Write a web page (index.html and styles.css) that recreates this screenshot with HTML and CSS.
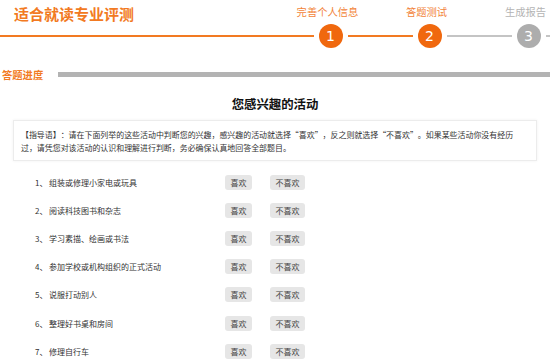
FILE: index.html
```html
<!doctype html>
<html lang="zh-CN">
<head>
<meta charset="utf-8">
<title>适合就读专业评测</title>
<link rel="stylesheet" href="styles.css">
</head>

<body>
<div class="head">
    <div class="top">
        <div class="brand">
            <h1>适合就读专业评测</h1>
            <div class="track"><span class="bar on"></span></div>
        </div>
        <div class="step on">
            <p>完善个人信息</p>
            <div class="track"><span class="bar on"></span><b>1</b><span class="bar on"></span></div>
        </div>
        <div class="step on">
            <p>答题测试</p>
            <div class="track"><span class="bar on"></span><b>2</b><span class="bar"></span></div>
        </div>
        <div class="step">
            <p>生成报告</p>
            <div class="track"><span class="bar"></span><b>3</b><span class="bar"></span></div>
        </div>
    </div>
</div>

<div class="progress">
    <span class="progress_label">答题进度</span>
    <span class="progress_bar"></span>
</div>

<h2 class="quiz_title">您感兴趣的活动</h2>

<div class="guide">【指导语】：请在下面列举的这些活动中判断您的兴趣，感兴趣的活动就选择“喜欢”，反之则就选择“不喜欢”。如果某些活动你没有经历过，请凭您对该活动的认识和理解进行判断，务必确保认真地回答全部题目。</div>

<ul class="quiz">
    <li><span class="num">1、</span><span class="text">组装或修理小家电或玩具</span><button>喜欢</button><button>不喜欢</button></li>
    <li><span class="num">2、</span><span class="text">阅读科技图书和杂志</span><button>喜欢</button><button>不喜欢</button></li>
    <li><span class="num">3、</span><span class="text">学习素描、绘画或书法</span><button>喜欢</button><button>不喜欢</button></li>
    <li><span class="num">4、</span><span class="text">参加学校或机构组织的正式活动</span><button>喜欢</button><button>不喜欢</button></li>
    <li><span class="num">5、</span><span class="text">说服打动别人</span><button>喜欢</button><button>不喜欢</button></li>
    <li><span class="num">6、</span><span class="text">整理好书桌和房间</span><button>喜欢</button><button>不喜欢</button></li>
    <li><span class="num">7、</span><span class="text">修理自行车</span><button>喜欢</button><button>不喜欢</button></li>
</ul>
</body>
</html>
```

FILE: styles.css
```css
html, body {
    margin: 0;
    overflow: hidden;
    background: #fff;
    font-family: "Noto Sans CJK SC", "Noto Sans", sans-serif;
    color: #333;
}
/* 顶部标题和步骤 */
.head {
    overflow: hidden;
}
.top {
    display: flex;
    width: 578px;
}
.brand {
    flex: 1;
}
.brand h1 {
    margin: 0;
    height: 24px;
    padding-left: 14px;
    font-size: 15px;
    line-height: 28px;
    font-weight: bold;
    color: #f27a22;
}
.step {
    width: 99px;
}
.step p {
    margin: 0;
    height: 24px;
    line-height: 24px;
    padding-right: 6px;
    text-align: center;
    font-size: 10.3px;
    color: #b4b4b4;
}
.step.on p {
    color: #f2843a;
}
.track {
    display: flex;
    align-items: center;
    height: 24px;
}
.bar {
    flex: 1;
    height: 2px;
    background: #c4c4c4;
}
.bar.on {
    background: #f27a22;
}
.track b {
    width: 24px;
    height: 24px;
    margin: 0 5px;
    border-radius: 50%;
    background: #adadad;
    color: #fff;
    font: normal 14px/24px "DejaVu Sans", sans-serif;
    text-align: center;
}
.step.on .track b {
    background: #f0680e;
}
/* 进度条 */
.progress {
    display: flex;
    align-items: center;
    margin-top: 18px;
    padding-left: 2px;
    height: 16px;
}
.progress_label {
    font-size: 10.3px;
    font-weight: bold;
    color: #f27a22;
}
.progress_bar {
    flex: 1;
    height: 5px;
    margin-left: 15px;
    background: #b3b3b3;
}
.quiz_title {
    margin: 14px 0 0;
    text-align: center;
    font-size: 12.4px;
    line-height: 16px;
    color: #111;
}
/* 指导语 */
.guide {
    width: 500px;
    margin: 8px 0 0 13px;
    padding: 7px 15px 6px 7px;
    border: 1px solid #ececec;
    box-shadow: 0 0 3px rgba(0, 0, 0, .06);
    font-size: 7.95px;
    line-height: 13px;
    text-spacing-trim: space-all;
    font-feature-settings: "fwid";
    color: #333;
}
/* 题目列表 */
.quiz {
    list-style: none;
    margin: 7px 0 0;
    padding: 0 0 0 35px;
}
.quiz li {
    display: flex;
    align-items: center;
    height: 28.2px;
    font-size: 8px;
}
.quiz .num {
    width: 14px;
}
.quiz .text {
    width: 176px;
}
.quiz button {
    height: 15px;
    margin-right: 18px;
    padding: 0 5.5px;
    border: none;
    border-radius: 3px;
    background: #e6e6e6;
    color: #444;
    font: 8px/15px "Noto Sans CJK SC", sans-serif;
}
```
